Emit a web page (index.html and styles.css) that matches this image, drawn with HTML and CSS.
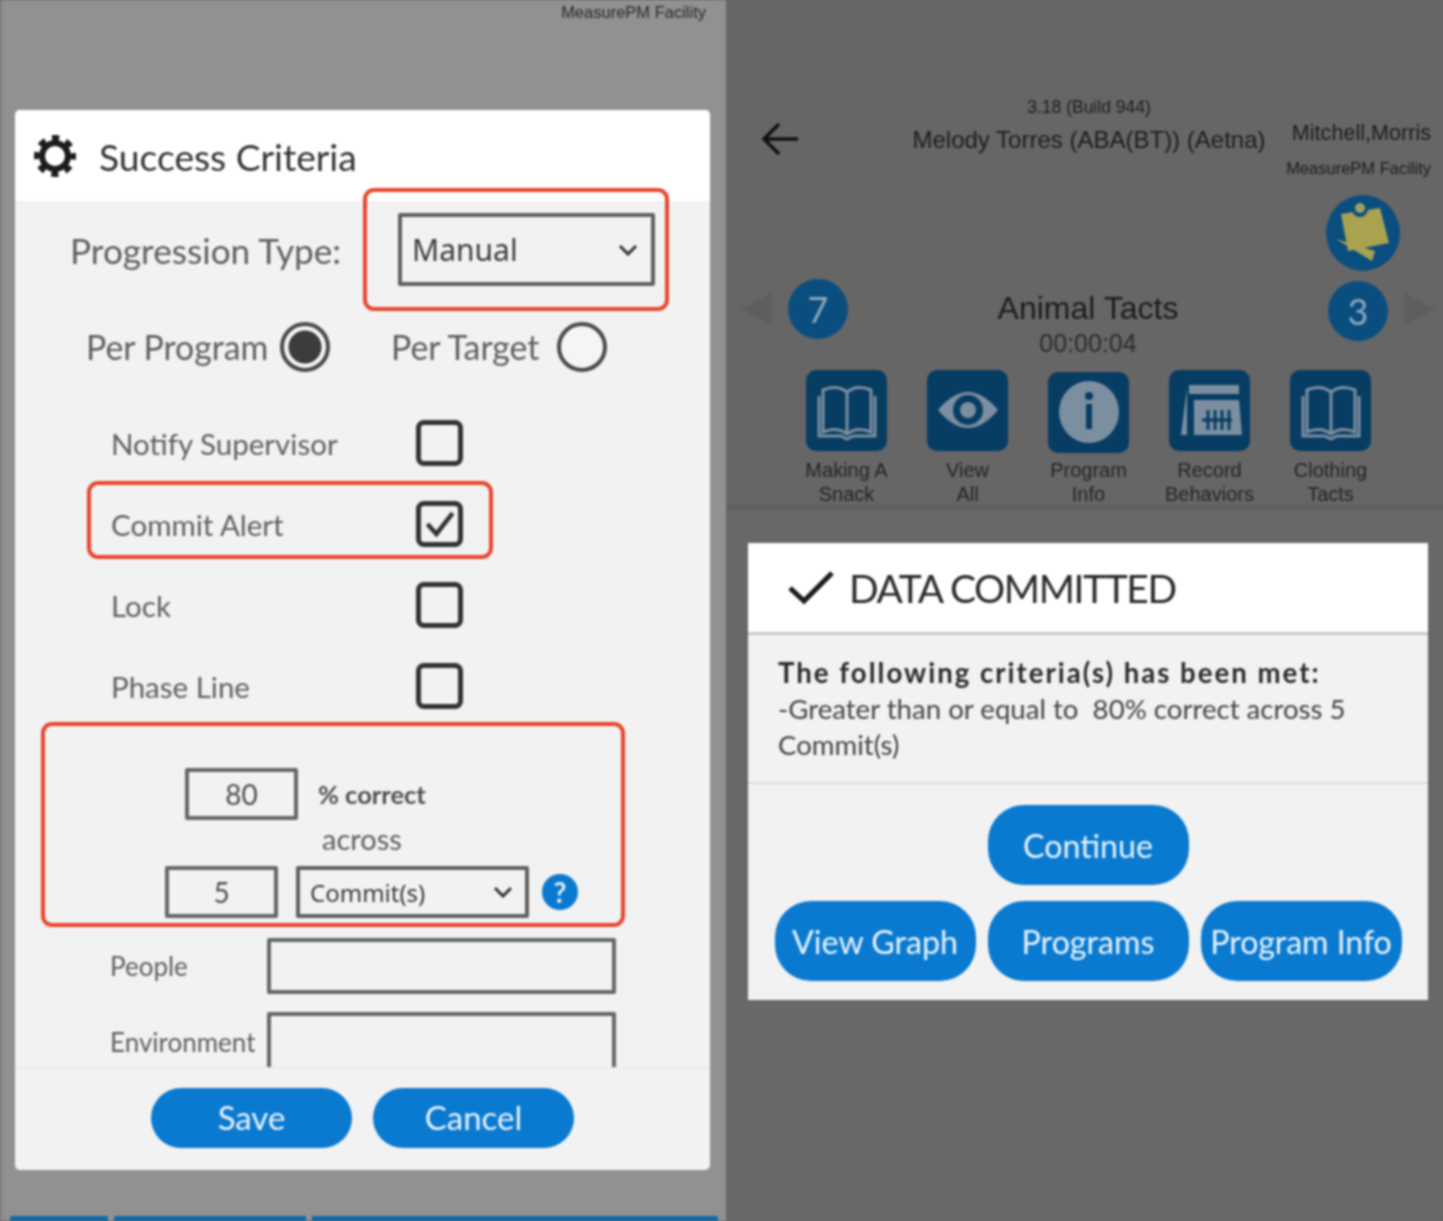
FILE: index.html
```html
<!DOCTYPE html>
<html lang="en">
<head>
    <meta charset="UTF-8">
    <meta name="viewport" content="width=device-width, initial-scale=1.0">
    <title>Success Criteria</title>
    <link rel="stylesheet" href="styles.css">
</head>
<body>
    <div class="stage">
        <!-- left phone: criteria form -->
        <div class="screen-left">
            <div class="left-facility">MeasurePM Facility</div>
            <div class="modal">
                <div class="modal-head">
                    <svg class="gear" viewBox="0 0 48 48" width="48" height="48">
                        <circle cx="24" cy="24" r="13" fill="none" stroke="#1c1c1c" stroke-width="6"/>
                        <circle cx="24" cy="24" r="18" fill="none" stroke="#1c1c1c" stroke-width="6" stroke-dasharray="7.14 7" stroke-dashoffset="3.57"/>
                    </svg>
                    <h1>Success Criteria</h1>
                </div>
                <div class="modal-body">
                    <div class="row-progress">
                        <span class="lbl-progress">Progression Type:</span>
                        <div class="select select-manual">
                            <span>Manual</span>
                            <svg viewBox="0 0 20 12" width="20" height="12"><path d="M2 2l8 8 8-8" fill="none" stroke="#333" stroke-width="3"/></svg>
                        </div>
                    </div>
                    <div class="row-radio">
                        <span class="lbl-program">Per Program</span>
                        <span class="radio radio-on"></span>
                        <span class="lbl-target">Per Target</span>
                        <span class="radio"></span>
                    </div>
                    <div class="row-check first">
                        <span>Notify Supervisor</span>
                        <span class="check"></span>
                    </div>
                    <div class="row-check">
                        <span>Commit Alert</span>
                        <span class="check">
                            <svg viewBox="0 0 40 40" width="36" height="36"><path d="M6 20l10 11L34 8" fill="none" stroke="#333" stroke-width="5"/></svg>
                        </span>
                    </div>
                    <div class="row-check">
                        <span>Lock</span>
                        <span class="check"></span>
                    </div>
                    <div class="row-check">
                        <span>Phase Line</span>
                        <span class="check"></span>
                    </div>
                    <div class="row-percent">
                        <div class="box box-num">80</div>
                        <span>% correct</span>
                    </div>
                    <div class="row-across">across</div>
                    <div class="row-commit">
                        <div class="box box-num">5</div>
                        <div class="select select-commit">
                            <span>Commit(s)</span>
                            <svg viewBox="0 0 20 12" width="20" height="12"><path d="M2 2l8 8 8-8" fill="none" stroke="#333" stroke-width="3"/></svg>
                        </div>
                        <span class="help">?</span>
                    </div>
                    <div class="row-field people">
                        <span>People</span>
                        <div class="box box-wide"></div>
                    </div>
                    <div class="row-field env">
                        <span>Environment</span>
                        <div class="box box-wide box-tall"></div>
                    </div>
                </div>
                <div class="modal-foot">
                    <button type="button" class="btn btn-small">Save</button>
                    <button type="button" class="btn btn-small">Cancel</button>
                </div>
                <div class="callout callout-select"></div>
                <div class="callout callout-alert"></div>
                <div class="callout callout-rule"></div>
            </div>
            <div class="tabs-peek">
                <span class="tab-a"></span>
                <span class="tab-b"></span>
                <span class="tab-c"></span>
            </div>
        </div>

        <!-- right phone: data committed dialog -->
        <div class="screen-right">
            <div class="behind">
                <div class="top">
                    <svg class="back" viewBox="0 0 38 34" width="38" height="34"><path d="M37 17H4M18 2L3 17l15 15" fill="none" stroke="#111" stroke-width="3.5"/></svg>
                    <div class="top-mid">
                        <div class="version">3.18 (Build 944)</div>
                        <div class="client">Melody Torres (ABA(BT)) (Aetna)</div>
                    </div>
                    <div class="top-right">
                        <div class="user">Mitchell,Morris</div>
                        <div class="facility">MeasurePM Facility</div>
                    </div>
                </div>
                <div class="notes-row">
                    <svg viewBox="0 0 74 76" width="74" height="76">
                        <ellipse cx="37" cy="38" rx="37" ry="38" fill="#0a4e80"/>
                        <path d="M10 44l36 22 3-10z" fill="#a9a34f"/>
                        <path d="M15 19l39-6 9 35-41 8z" fill="#a9a34f"/>
                        <circle cx="34" cy="14" r="8" fill="#0a4e80"/>
                        <circle cx="34" cy="13" r="5" fill="#a0a060"/>
                    </svg>
                </div>
                <div class="nav">
                    <span class="tri tri-left"></span>
                    <span class="count">7</span>
                    <div class="nav-mid">
                        <div class="program">Animal Tacts</div>
                        <div class="timer">00:00:04</div>
                    </div>
                    <span class="count count-right">3</span>
                    <span class="tri tri-right"></span>
                </div>
                <div class="tiles">
                    <div class="tile">
                        <div class="tile-icon">
                            <svg viewBox="0 0 80 80" width="80" height="80"><path d="M16 20v42q14-6 24 2 10-8 24-2V20q-14-6-24 2-10-8-24-2zM40 22v42M12 26v40h22l6 3 6-3h22V26" fill="none" stroke="#7c8fa0" stroke-width="3"/></svg>
                        </div>
                        <span>Making A<br>Snack</span>
                    </div>
                    <div class="tile">
                        <div class="tile-icon">
                            <svg viewBox="0 0 80 80" width="80" height="80"><path d="M10 40q30-36 60 0-30 36-60 0z" fill="#7c8fa0"/><circle cx="40" cy="40" r="15" fill="#073c63"/><circle cx="40" cy="40" r="8" fill="#7c8fa0"/></svg>
                        </div>
                        <span>View<br>All</span>
                    </div>
                    <div class="tile tile-low">
                        <div class="tile-icon">
                            <svg viewBox="0 0 80 80" width="80" height="80"><ellipse cx="40" cy="40" rx="30" ry="31" fill="#7c8fa0"/><circle cx="40" cy="24" r="4" fill="#073c63"/><rect x="37" y="32" width="6" height="25" fill="#073c63"/></svg>
                        </div>
                        <span>Program<br>Info</span>
                    </div>
                    <div class="tile">
                        <div class="tile-icon">
                            <svg viewBox="0 0 80 80" width="80" height="80"><path d="M19 15h50v9H19zM11 65l6-47v47zM24 30h45l3 35H24z" fill="#7c8fa0"/><path d="M32 50h30M38 40v20M45 40v20M52 40v20M59 40v20" stroke="#073c63" stroke-width="3"/></svg>
                        </div>
                        <span>Record<br>Behaviors</span>
                    </div>
                    <div class="tile">
                        <div class="tile-icon">
                            <svg viewBox="0 0 80 80" width="80" height="80"><path d="M16 20v42q14-6 24 2 10-8 24-2V20q-14-6-24 2-10-8-24-2zM40 22v42M12 26v40h22l6 3 6-3h22V26" fill="none" stroke="#7c8fa0" stroke-width="3"/></svg>
                        </div>
                        <span>Clothing<br>Tacts</span>
                    </div>
                </div>
            </div>
            <div class="dialog">
                <div class="dialog-head">
                    <svg viewBox="0 0 48 36" width="48" height="36"><path d="M3 18l14 13L45 3" fill="none" stroke="#1a1a1a" stroke-width="5"/></svg>
                    <h2>DATA COMMITTED</h2>
                </div>
                <div class="dialog-text">
                    <strong>The following criteria(s) has been met:</strong>
                    <div>-Greater than or equal to&nbsp; 80% correct across 5</div>
                    <div>Commit(s)</div>
                </div>
                <div class="dialog-actions">
                    <button type="button" class="btn btn-big">Continue</button>
                    <div class="action-row">
                        <button type="button" class="btn btn-big">View Graph</button>
                        <button type="button" class="btn btn-big">Programs</button>
                        <button type="button" class="btn btn-big btn-tight">Program Info</button>
                    </div>
                </div>
            </div>
        </div>
    </div>
</body>
</html>
```

FILE: styles.css
```css
* {
    box-sizing: border-box;
}
body {
    margin: 0;
    width: 1443px;
    height: 1221px;
    overflow: hidden;
    background: #666;
    font-family: Lato, "Noto Sans", sans-serif;
}
h1, h2 {
    margin: 0;
    font-weight: 400;
}
.stage {
    display: flex;
    height: 1221px;
    filter: blur(0.9px);
}

/* left screen */
.screen-left {
    width: 726px;
    height: 1221px;
    background: #919191;
    border-left: 4px solid #8a8a8a;
    padding-left: 11px;
}
.left-facility {
    height: 110px;
    padding: 3px 20px 0 0;
    text-align: right;
    font: 16.5px/18px "Liberation Sans", sans-serif;
    color: #2a2a2a;
}
.modal {
    position: relative;
    width: 695px;
    height: 1060px;
    background: #f2f2f2;
    border-radius: 5px;
}
.modal-head {
    display: flex;
    align-items: center;
    height: 91px;
    padding: 1px 0 0 16px;
    background: #fff;
    border-radius: 5px 5px 0 0;
}
.modal-head h1 {
    margin-left: 20px;
    font-size: 37.2px;
    color: #333;
}
.modal-body {
    height: 866px;
    overflow: hidden;
    padding-top: 12px;
    font-size: 29.5px;
    color: #5f5f5f;
}
.row-progress {
    display: flex;
    align-items: center;
    height: 73px;
    padding-left: 55px;
}
.lbl-progress {
    width: 328px;
    font-size: 35.2px;
}
.select {
    display: flex;
    align-items: center;
    justify-content: space-between;
    border: 4px solid #606060;
    border-radius: 2px;
    font-family: "Noto Sans", sans-serif;
    color: #3a3a3a;
}
.select-manual {
    width: 257px;
    height: 73px;
    padding: 0 13px 0 10px;
    font-size: 30px;
}
.row-radio {
    display: flex;
    align-items: center;
    height: 50px;
    margin-top: 36px;
    padding-left: 71px;
    font-size: 33.8px;
}
.lbl-program {
    width: 194px;
}
.lbl-target {
    width: 166px;
    margin-left: 61px;
}
.radio {
    width: 50px;
    height: 50px;
    border: 4px solid #4a4a4a;
    border-radius: 50%;
    background: #f5f5f5;
}
.radio-on {
    background: radial-gradient(circle, #3c3c3c 0 16px, #f5f5f5 17px);
}
.row-check {
    display: flex;
    align-items: center;
    height: 46px;
    margin-top: 35px;
    padding-left: 96px;
}
.row-check.first {
    margin-top: 48px;
}
.row-check > span:first-child {
    width: 305px;
}
.check {
    display: flex;
    align-items: center;
    justify-content: center;
    width: 47px;
    height: 46px;
    border: 5px solid #333;
    border-radius: 8px;
}
.box {
    border: 4px solid #666;
    border-radius: 2px;
}
.box-num {
    display: flex;
    align-items: center;
    justify-content: center;
    width: 113px;
    height: 52px;
    font-size: 28px;
    color: #4f4f4f;
}
.row-percent {
    display: flex;
    align-items: center;
    gap: 20px;
    margin-top: 59px;
    padding-left: 170px;
    font-size: 25.5px;
    font-weight: 700;
    color: #4f4f4f;
}
.row-percent .box-num {
    font-weight: 400;
}
.row-across {
    height: 30px;
    margin-top: 5px;
    padding-left: 307px;
    font-size: 29px;
    line-height: 28px;
}
.row-commit {
    display: flex;
    align-items: center;
    margin-top: 11px;
    padding-left: 150px;
}
.select-commit {
    width: 233px;
    height: 52px;
    margin-left: 18px;
    padding: 0 12px 0 10px;
    font-size: 24px;
}
.help {
    width: 36px;
    height: 36px;
    margin-left: 13px;
    border-radius: 50%;
    background: #0a7ad1;
    color: #e6eef5;
    font-size: 28px;
    font-weight: 700;
    line-height: 36px;
    text-align: center;
}
.row-field {
    display: flex;
    padding-left: 95px;
    font-size: 26px;
    line-height: 56px;
}
.row-field span {
    width: 157px;
}
.row-field.people {
    margin-top: 20px;
}
.row-field.env {
    margin-top: 18px;
}
.row-field.env span {
    line-height: 60px;
}
.box-wide {
    width: 349px;
    height: 56px;
}
.box-tall {
    height: 90px;
}
.modal-foot {
    display: flex;
    gap: 21px;
    height: 103px;
    padding: 20px 0 0 136px;
    border-top: 1px solid #e6e6e6;
}
.btn {
    border: none;
    background: #0a7ad1;
    color: #e9f3fb;
    font-family: Lato, "Noto Sans", sans-serif;
    font-size: 33px;
    padding: 0 0 2px;
}
.btn-small {
    width: 201px;
    height: 60px;
    border-radius: 30px;
}
.callout {
    position: absolute;
    border: 4px solid #e8452d;
    border-radius: 11px;
}
.callout-select {
    left: 348px;
    top: 78px;
    width: 306px;
    height: 123px;
}
.callout-alert {
    left: 72px;
    top: 371px;
    width: 406px;
    height: 78px;
}
.callout-rule {
    left: 26px;
    top: 612px;
    width: 584px;
    height: 205px;
}
.tabs-peek {
    display: flex;
    gap: 6px;
    margin: 46px 0 0 -5px;
}
.tabs-peek span {
    height: 5px;
    background: #0b6cb3;
}
.tab-a { width: 98px; }
.tab-b { width: 192px; }
.tab-c { width: 406px; }

/* right screen */
.screen-right {
    width: 717px;
    height: 1221px;
    background: #686868;
}
.behind {
    height: 510px;
    background: #666;
    border-bottom: 5px solid #5e5e5e;
    color: #1c1c1c;
    font-family: "Liberation Sans", sans-serif;
    filter: blur(0.5px);
}
.top {
    display: flex;
    height: 190px;
    padding-top: 97px;
}
.back {
    margin: 25px 0 0 35px;
}
.top-mid {
    width: 356px;
    margin-left: 112px;
    text-align: center;
}
.version {
    font-size: 17.5px;
    line-height: 20px;
    color: #1d1d1d;
}
.client {
    margin-top: 9px;
    font-size: 24px;
    line-height: 28px;
    white-space: nowrap;
}
.top-right {
    flex: 1;
    padding-right: 12px;
    text-align: right;
    white-space: nowrap;
}
.user {
    margin-top: 23px;
    font-size: 21.6px;
    line-height: 26px;
}
.facility {
    margin-top: 12px;
    font-size: 16.5px;
    line-height: 20px;
}
.notes-row {
    display: flex;
    justify-content: flex-end;
    height: 75px;
    padding-right: 43px;
    margin-top: 5px;
}
.nav {
    display: flex;
    align-items: center;
    height: 62px;
    margin-top: 8px;
    padding: 0 7px 0 14px;
}
.tri {
    width: 0;
    height: 0;
    border-top: 16px solid transparent;
    border-bottom: 16px solid transparent;
}
.tri-left {
    border-right: 32px solid #5e5e5e;
}
.tri-right {
    border-left: 32px solid #5e5e5e;
}
.count {
    width: 60px;
    height: 60px;
    margin-left: 16px;
    border-radius: 50%;
    background: #0a4e80;
    color: #8fa7ba;
    font: 36px/60px Lato, sans-serif;
    text-align: center;
}
.count-right {
    margin: 3px 16px 0 0;
}
.nav-mid {
    flex: 1;
    padding-top: 30px;
    text-align: center;
}
.program {
    font-size: 32px;
    line-height: 36px;
}
.timer {
    margin-top: 2px;
    font-size: 25px;
    line-height: 30px;
    color: #2b2b2b;
}
.tiles {
    display: flex;
    gap: 40px;
    padding-left: 80px;
    margin-top: 32px;
}
.tile {
    width: 81px;
    margin-top: -2px;
    text-align: center;
    font-size: 20px;
    line-height: 24px;
    color: #242424;
    white-space: nowrap;
}
.tile span {
    display: block;
    margin: 7px -20px 0;
}
.tile-icon {
    width: 81px;
    height: 81px;
    border-radius: 10px;
    background: #073c63;
}
.tile-low .tile-icon {
    margin-top: 2px;
    margin-bottom: -2px;
}
.dialog {
    width: 680px;
    height: 457px;
    margin: 33px 0 0 22px;
    background: #f2f2f2;
}
.dialog-head {
    display: flex;
    align-items: center;
    height: 92px;
    padding-left: 39px;
    background: #fff;
    border-bottom: 3px solid #c9c9c9;
}
.dialog-head h2 {
    margin-left: 14px;
    font-size: 39px;
    letter-spacing: -1.4px;
    color: #2a2a2a;
}
.dialog-text {
    height: 149px;
    padding: 20px 0 0 30px;
    border-bottom: 2px solid #dedede;
    font-size: 27.6px;
    line-height: 36px;
    color: #444;
}
.dialog-text strong {
    display: block;
    letter-spacing: 2px;
    color: #2a2a2a;
}
.dialog-actions {
    display: flex;
    flex-direction: column;
    align-items: center;
    padding-top: 21px;
}
.action-row {
    display: flex;
    gap: 12px;
    margin-top: 16px;
}
.btn-big {
    width: 201px;
    height: 80px;
    border-radius: 36px;
    font-size: 32.2px;
    padding: 0;
}
.btn-tight {
    letter-spacing: -0.1px;
}
```
